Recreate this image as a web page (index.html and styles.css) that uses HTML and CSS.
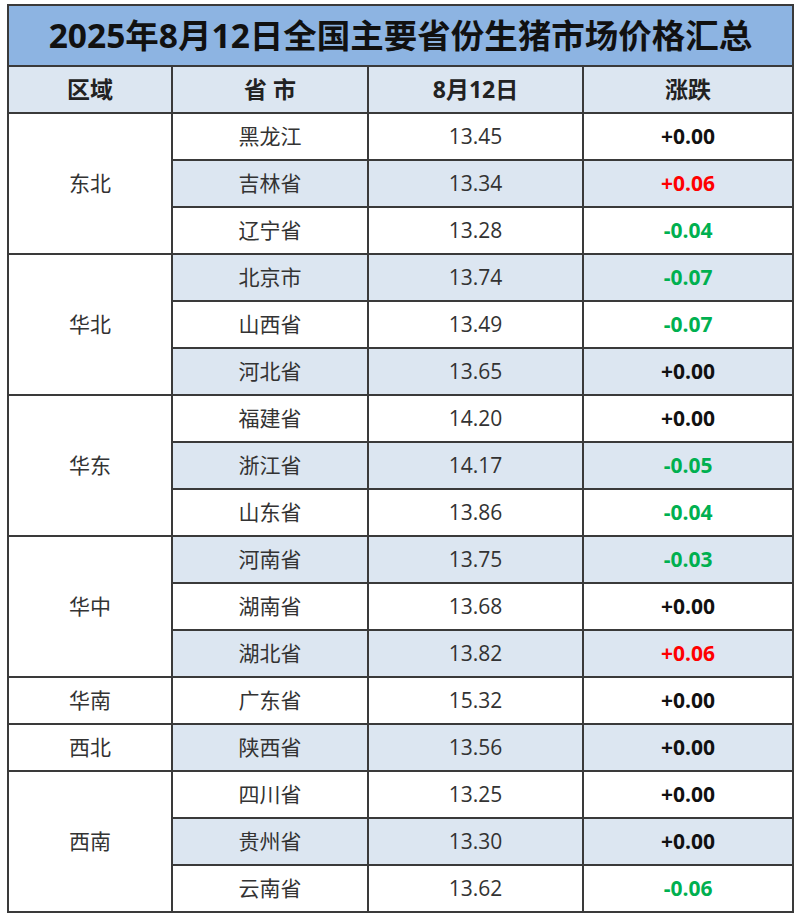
FILE: index.html
```html
<!DOCTYPE html>
<html lang="zh">
<head>
<meta charset="utf-8">
<title>生猪市场价格汇总</title>
<link rel="stylesheet" href="styles.css">
</head>
<body>
<table class="price-table">
  <colgroup>
    <col class="c-region"><col class="c-prov"><col class="c-price"><col class="c-chg">
  </colgroup>
  <thead>
    <tr class="title-row"><th colspan="4">2025年8月12日全国主要省份生猪市场价格汇总</th></tr>
    <tr class="head-row"><th>区域</th><th>省 市</th><th>8月12日</th><th>涨跌</th></tr>
  </thead>
  <tbody>
    <tr><td class="region" rowspan="3">东北</td><td>黑龙江</td><td>13.45</td><td class="chg flat">+0.00</td></tr>
    <tr class="alt"><td>吉林省</td><td>13.34</td><td class="chg up">+0.06</td></tr>
    <tr><td>辽宁省</td><td>13.28</td><td class="chg down">-0.04</td></tr>

    <tr class="alt"><td class="region" rowspan="3">华北</td><td>北京市</td><td>13.74</td><td class="chg down">-0.07</td></tr>
    <tr><td>山西省</td><td>13.49</td><td class="chg down">-0.07</td></tr>
    <tr class="alt"><td>河北省</td><td>13.65</td><td class="chg flat">+0.00</td></tr>

    <tr><td class="region" rowspan="3">华东</td><td>福建省</td><td>14.20</td><td class="chg flat">+0.00</td></tr>
    <tr class="alt"><td>浙江省</td><td>14.17</td><td class="chg down">-0.05</td></tr>
    <tr><td>山东省</td><td>13.86</td><td class="chg down">-0.04</td></tr>

    <tr class="alt"><td class="region" rowspan="3">华中</td><td>河南省</td><td>13.75</td><td class="chg down">-0.03</td></tr>
    <tr><td>湖南省</td><td>13.68</td><td class="chg flat">+0.00</td></tr>
    <tr class="alt"><td>湖北省</td><td>13.82</td><td class="chg up">+0.06</td></tr>

    <tr><td class="region">华南</td><td>广东省</td><td>15.32</td><td class="chg flat">+0.00</td></tr>
    <tr class="alt"><td class="region">西北</td><td>陕西省</td><td>13.56</td><td class="chg flat">+0.00</td></tr>

    <tr><td class="region" rowspan="3">西南</td><td>四川省</td><td>13.25</td><td class="chg flat">+0.00</td></tr>
    <tr class="alt"><td>贵州省</td><td>13.30</td><td class="chg flat">+0.00</td></tr>
    <tr><td>云南省</td><td>13.62</td><td class="chg down">-0.06</td></tr>
  </tbody>
</table>
</body>
</html>
```
FILE: styles.css
```css
html, body {
  margin: 0;
  padding: 0;
  background: #ffffff;
}
body {
  padding: 4px 0 0 7px;
  font-family: "Open Sans", "Noto Sans CJK SC", sans-serif;
  color: #1a1a1a;
}
.price-table {
  border-collapse: collapse;
  width: 785px;
  table-layout: fixed;
}
.c-region { width: 164px; }
.c-prov { width: 196px; }
.c-price { width: 215px; }
.c-chg { width: 210px; }

.price-table th,
.price-table td {
  border: 2px solid #3a3a3a;
  text-align: center;
  vertical-align: middle;
  padding: 0;
  height: 45px;
  font-size: 21px;
  line-height: 1;
}
.title-row th {
  background: #8db4e2;
  height: 59px;
  font-size: 33.5px;
  font-weight: 700;
  color: #111;
}
.head-row th {
  background: #dce6f1;
  font-size: 23px;
  font-weight: 700;
  color: #222;
}
.price-table td {
  background: #ffffff;
  color: #333;
}
.price-table tr.alt td {
  background: #dce6f1;
}
.price-table tr.alt td.region,
.price-table td.region {
  background: #ffffff;
}
.chg {
  font-weight: 700;
}
.chg.flat { color: #111; }
.price-table td.chg.up { color: #ff0000; }
.price-table td.chg.down { color: #00b050; }
```
